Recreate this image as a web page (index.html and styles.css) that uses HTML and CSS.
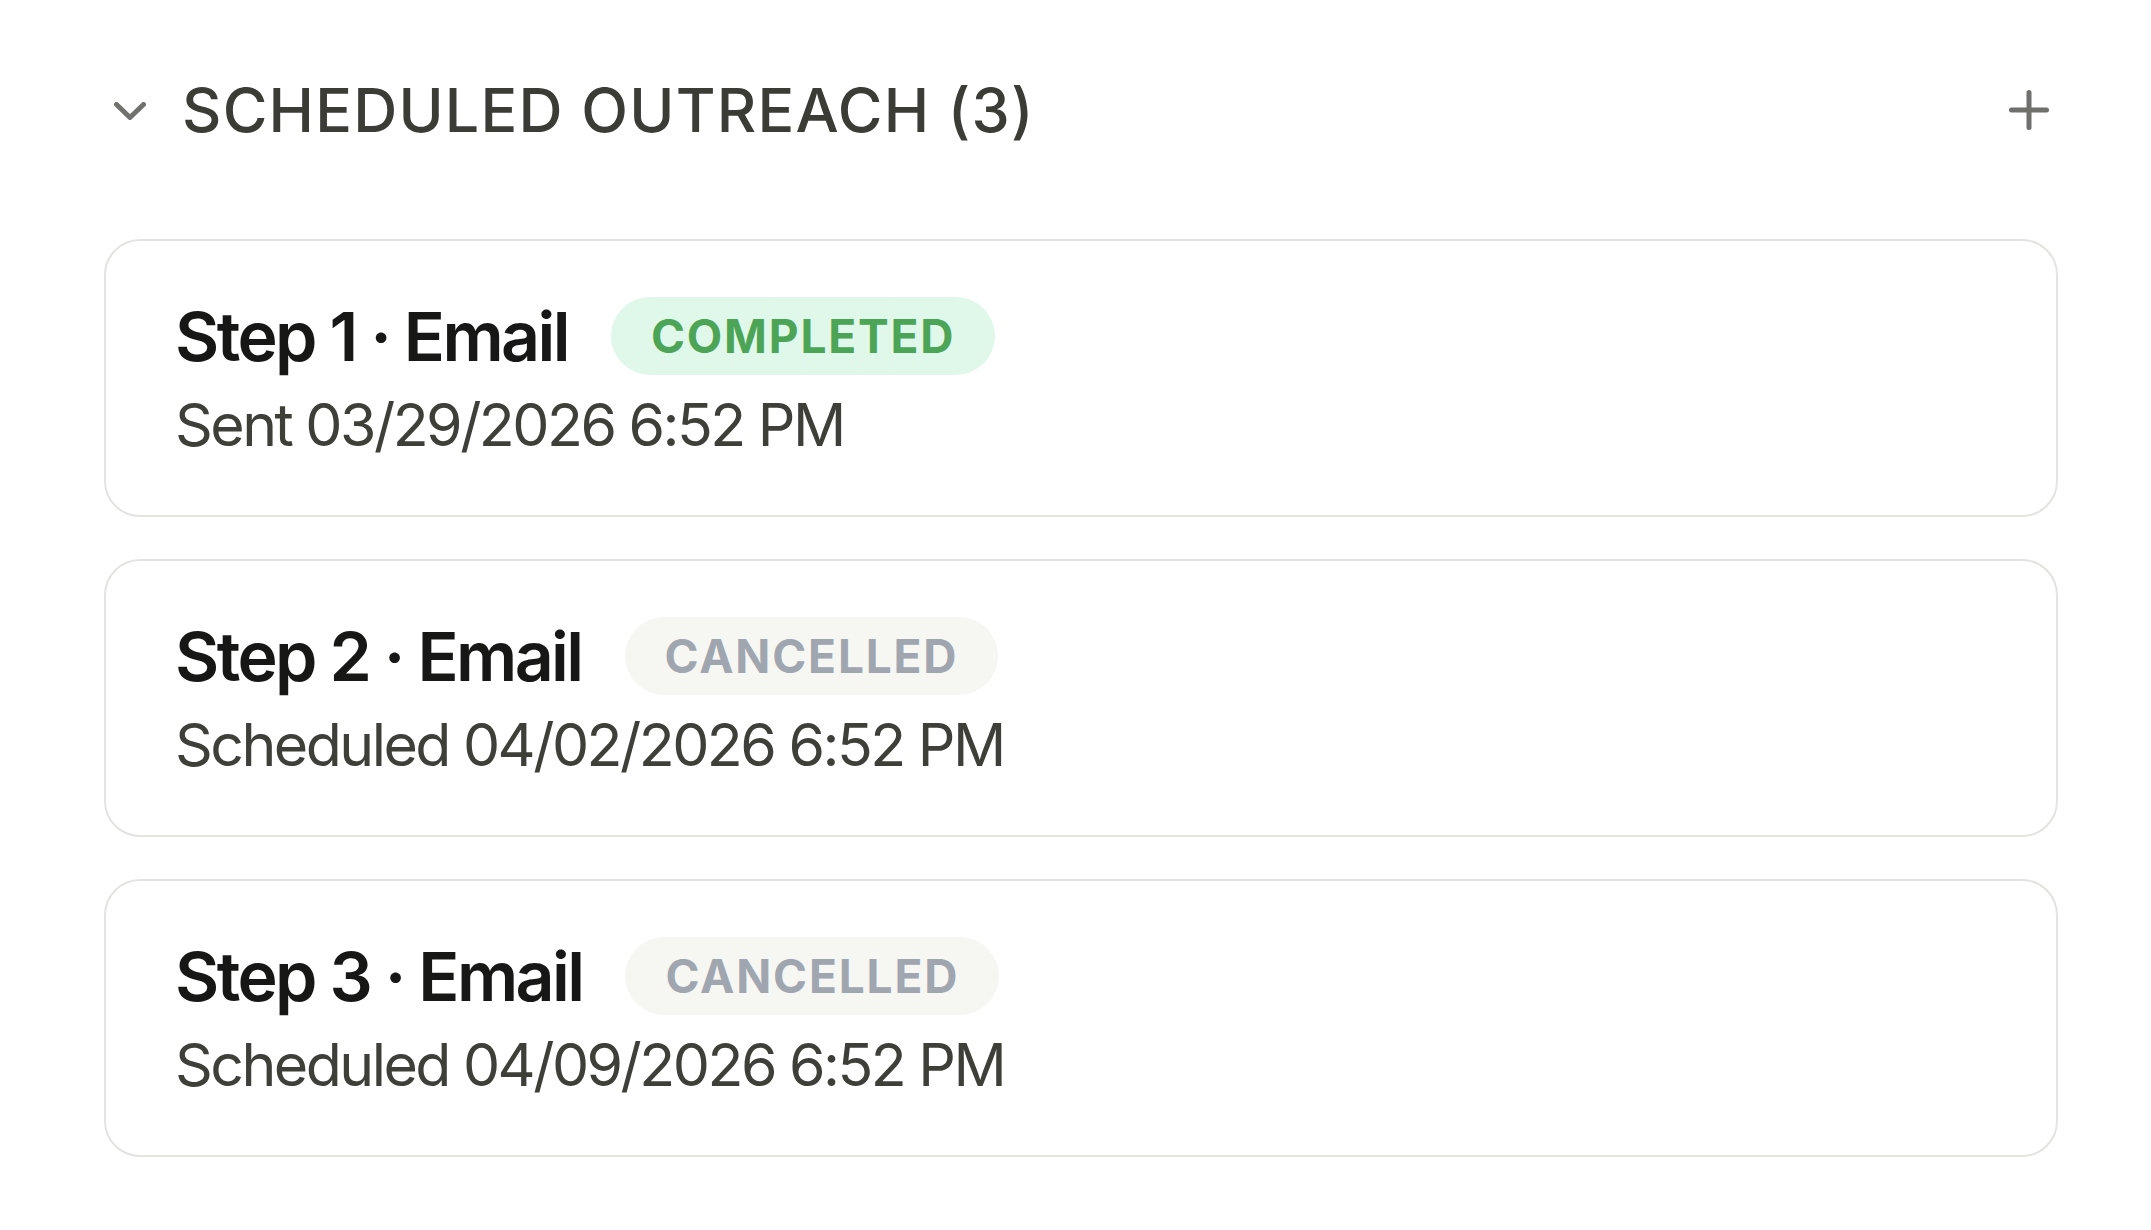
FILE: index.html
```html
<!DOCTYPE html>
<html lang="en">
<head>
<meta charset="utf-8">
<title>Scheduled Outreach</title>
<link rel="stylesheet" href="styles.css">
</head>
<body>
<section class="panel">
  <header class="panel-header">
    <div class="header-left">
      <svg class="chevron" width="32" height="18" viewBox="0 0 32 18" aria-hidden="true">
        <polyline points="2.5,2.5 16,15.5 29.5,2.5" fill="none" stroke="currentColor" stroke-width="5" stroke-linecap="round" stroke-linejoin="round"/>
      </svg>
      <h2 class="panel-title">SCHEDULED OUTREACH (3)</h2>
    </div>
    <svg class="plus" width="40" height="40" viewBox="0 0 40 40" aria-hidden="true">
      <path d="M20 2.5V37.5M2.5 20H37.5" fill="none" stroke="currentColor" stroke-width="5" stroke-linecap="round"/>
    </svg>
  </header>

  <div class="card-list">
    <article class="card">
      <div class="card-row">
        <span class="card-title">Step 1 · Email</span>
        <span class="badge badge-completed">COMPLETED</span>
      </div>
      <div class="card-sub">Sent 03/29/2026 6:52 PM</div>
    </article>
    <article class="card">
      <div class="card-row">
        <span class="card-title">Step 2 · Email</span>
        <span class="badge badge-cancelled">CANCELLED</span>
      </div>
      <div class="card-sub">Scheduled 04/02/2026 6:52 PM</div>
    </article>
    <article class="card">
      <div class="card-row">
        <span class="card-title">Step 3 · Email</span>
        <span class="badge badge-cancelled">CANCELLED</span>
      </div>
      <div class="card-sub">Scheduled 04/09/2026 6:52 PM</div>
    </article>
  </div>
</section>
</body>
</html>
```
FILE: styles.css
```css
* { box-sizing: border-box; }

html, body {
  margin: 0;
  padding: 0;
  background: #ffffff;
}

body {
  font-family: Inter, "Noto Sans", "Liberation Sans", sans-serif;
  padding-top: 70px;
}

.panel {
  margin-left: 104px;
  width: 1954px;
}

.panel-header {
  display: flex;
  align-items: center;
  justify-content: space-between;
  height: 80px;
  padding: 0 9px 0 10px;
}

.header-left {
  display: flex;
  align-items: center;
  gap: 36px;
}

.chevron {
  display: block;
  color: #71716d;
  margin-top: 2px;
}

.panel-title {
  margin: 0;
  font-size: 61px;
  line-height: 80px;
  font-weight: 500;
  color: #3c3c36;
  letter-spacing: 0.02em;
}

.plus {
  display: block;
  color: #6f6f6b;
}

.card-list {
  margin-top: 89px;
  display: flex;
  flex-direction: column;
  gap: 42px;
}

.card {
  border: 2px solid #e3e3e0;
  border-radius: 36px;
  padding: 56px 70px 54px 69px;
  height: 278px;
}

.card-row {
  display: flex;
  align-items: center;
  gap: 43px;
  height: 78px;
}

.card-title {
  font-size: 68px;
  line-height: 78px;
  font-weight: 600;
  color: #171715;
  letter-spacing: -0.038em;
}

.card-sub {
  margin-top: 14px;
  font-size: 59px;
  line-height: 72px;
  font-weight: 400;
  color: #3f3f3a;
  letter-spacing: -0.043em;
}

.badge {
  display: inline-flex;
  align-items: center;
  height: 78px;
  padding: 0 40px;
  border-radius: 39px;
  font-size: 46px;
  font-weight: 700;
  letter-spacing: 0.04em;
}

.badge-completed {
  background: #e0f8ea;
  color: #4ca456;
}

.badge-cancelled {
  background: #f6f6f3;
  color: #a0a6af;
}
```
